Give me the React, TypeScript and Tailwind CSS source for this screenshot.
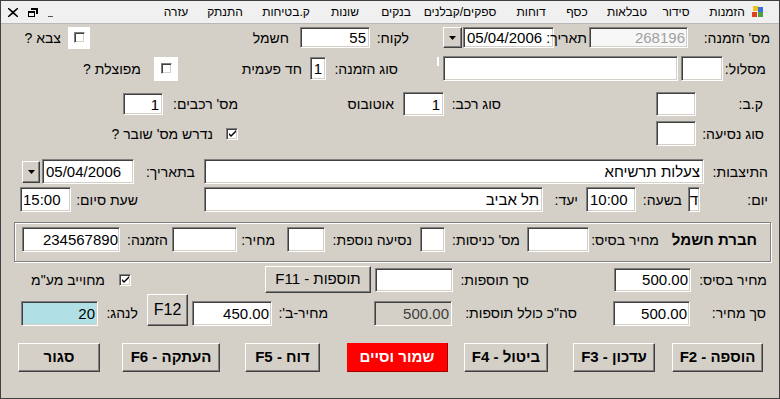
import React from 'react';

// classic win32 look
const sunken =
  'shrink-0 box-border border border-t-[#808080] border-l-[#808080] border-b-white border-r-white shadow-[inset_1px_1px_0_#404040,inset_-1px_-1px_0_#d4d0c8]';
const raised =
  'shrink-0 box-border border border-t-white border-l-white border-b-[#404040] border-r-[#404040] shadow-[inset_-1px_-1px_0_#808080] bg-[#d4d0c8] flex items-center justify-center';
const label = 'shrink-0 text-right whitespace-nowrap text-[14px] leading-none text-black';
const value = 'text-[15px] leading-none text-black whitespace-nowrap';

const DropArrow = () => (
  <svg width="7" height="4" viewBox="0 0 7 4">
    <path d="M0 0h7L3.5 4z" fill="#000" />
  </svg>
);

const Tick = () => (
  <svg width="9" height="9" viewBox="0 0 9 9">
    <path d="M1 4l2 2 5-5v2L3 8 1 6z" fill="#000" />
  </svg>
);

const menu: { text: string; w: string }[] = [
  { text: 'עזרה', w: 'w-[8px]' },
  { text: 'התנתק', w: 'w-[90px]' },
  { text: 'ק.בטיחות', w: 'w-[32px]' },
  { text: 'שונות', w: 'w-[86px]' },
  { text: 'בנקים', w: 'w-[16px]' },
  { text: 'ספקים/קבלנים', w: 'w-[112px]' },
  { text: 'דוחות', w: 'w-[30px]' },
  { text: 'כסף', w: 'w-[62px]' },
  { text: 'טבלאות', w: 'w-[38px]' },
  { text: 'סידור', w: 'w-[60px]' },
  { text: 'הזמנות', w: 'w-[42px]' },
];

export default function App() {
  return (
    <div className="w-[780px] h-[399px] box-border border border-[#404040] bg-[#d4d0c8] overflow-hidden font-['Liberation_Sans',Arial,sans-serif]">
      {/* menu strip */}
      <div className="h-[23px] flex items-center bg-[#f0f0f0] border-b border-[#b8b8b8]">
        <div className="w-[171px] shrink-0 flex items-center">
          <svg className="ml-[7px]" width="10" height="9" viewBox="0 0 10 9">
            <path d="M1 0l4 3.2L9 0h1v1L6.2 4.5 10 8v1H9L5 5.8 1 9H0V8l3.8-3.5L0 1V0z" fill="#000" />
          </svg>
          <svg className="ml-[10px]" width="10" height="9" viewBox="0 0 10 9">
            <path d="M3 0h7v6H8V2H3z M0 3h7v6H0z M1 5v3h5V5z" fill="#000" fillRule="evenodd" />
          </svg>
          <div className="ml-[10px] mt-[8px] w-[5px] h-[1px] bg-[#555]" />
        </div>
        {menu.map((m) => (
          <div key={m.text} dir="rtl" className={`${m.w} shrink-0 flex justify-center whitespace-nowrap text-[12px] text-black`}>
            {m.text}
          </div>
        ))}
        <div className="w-[20px] shrink-0 flex justify-center">
          <svg width="12" height="12" viewBox="0 0 12 12">
            <rect x="0" y="6" width="5" height="5" fill="#e04020" />
            <rect x="6" y="1" width="5" height="5" fill="#3a70d8" />
            <rect x="1" y="0" width="5" height="5" fill="#f0c020" />
            <rect x="6" y="6" width="5" height="5" fill="#50a040" />
          </svg>
        </div>
      </div>

      {/* row 1 */}
      <div className="mt-[3px] h-[21px] flex items-center">
        <div dir="rtl" className={`${label} ml-[13px] w-[47px]`}>צבא ?</div>
        <div className="ml-[7px] w-[22px] h-[22px] shrink-0 bg-white flex items-center justify-center">
          <div className={`${sunken} w-[11px] h-[11px] bg-white`} />
        </div>
        <div dir="rtl" className={`${label} ml-[110px] w-[89px]`}>חשמל</div>
        <div className={`${sunken} ml-[11px] w-[70px] h-[21px] bg-white flex items-center justify-end pr-[3px] ${value}`}>55</div>
        <div dir="rtl" className={`${label} w-[39px]`}>לקוח:</div>
        <div className={`${raised} ml-[34px] w-[19px] h-[21px]`}>
          <DropArrow />
        </div>
        <div className={`${sunken} ml-[1px] w-[91px] h-[21px] bg-white flex items-center pl-[3px] ${value}`}>05/04/2006</div>
        <div dir="rtl" className={`${label} w-[33px]`}>תאריך:</div>
        <div className={`${sunken} ml-[2px] w-[99px] h-[21px] bg-[#f7f7f7] flex items-center justify-end pr-[2px] text-[15px] leading-none text-[#a0a0a0]`}>268196</div>
        <div dir="rtl" className={`${label} w-[82px]`}>מס' הזמנה:</div>
      </div>

      {/* row 2 */}
      <div className="mt-[8px] h-[25px] flex items-center">
        <div dir="rtl" className={`${label} ml-[69px] w-[71px]`}>מפוצלת ?</div>
        <div className="ml-[13px] w-[24px] h-[24px] shrink-0 bg-white flex items-center justify-center">
          <div className={`${sunken} w-[11px] h-[11px] bg-white`} />
        </div>
        <div dir="rtl" className={`${label} ml-[53px] w-[71px]`}>חד פעמית</div>
        <div className={`${sunken} ml-[8px] w-[16px] h-[23px] bg-white flex items-center justify-center ${value}`}>1</div>
        <div dir="rtl" className={`${label} w-[72px]`}>סוג הזמנה:</div>
        <div className="ml-[39px] w-[2px] h-[9px] shrink-0 self-start mt-[1px] bg-white" />
        <div className={`${sunken} ml-[4px] w-[235px] h-[25px] bg-white`} />
        <div className={`${sunken} ml-[3px] w-[42px] h-[25px] bg-white`} />
        <div dir="rtl" className={`${label} w-[43px]`}>מסלול:</div>
      </div>

      {/* row 3 */}
      <div className="mt-[11px] h-[24px] flex items-center">
        <div className={`${sunken} ml-[122px] w-[40px] h-[22px] bg-white flex items-center justify-end pr-[3px] ${value}`}>1</div>
        <div dir="rtl" className={`${label} w-[75px]`}>מס' רכבים:</div>
        <div dir="rtl" className={`${label} ml-[93px] w-[63px]`}>אוטובוס</div>
        <div className={`${sunken} ml-[9px] w-[41px] h-[24px] bg-white flex items-center justify-end pr-[3px] ${value}`}>1</div>
        <div dir="rtl" className={`${label} w-[57px]`}>סוג רכב:</div>
        <div className={`${sunken} ml-[155px] w-[40px] h-[24px] bg-white`} />
        <div dir="rtl" className={`${label} w-[67px]`}>ק.ב:</div>
      </div>

      {/* row 4 */}
      <div className="mt-[5px] h-[25px] flex items-center">
        <div dir="rtl" className={`${label} ml-[89px] w-[123px]`}>נדרש מס' שובר ?</div>
        <div className={`${sunken} ml-[13px] w-[12px] h-[12px] bg-white flex items-center justify-center`}>
          <Tick />
        </div>
        <div className={`${sunken} ml-[418px] w-[40px] h-[25px] bg-white`} />
        <div dir="rtl" className={`${label} w-[68px]`}>סוג נסיעה:</div>
      </div>

      {/* row 5 */}
      <div className="mt-[13px] h-[25px] flex items-center">
        <div className={`${raised} ml-[21px] w-[18px] h-[22px]`}>
          <DropArrow />
        </div>
        <div className={`${sunken} ml-[2px] w-[92px] h-[25px] bg-white flex items-center pl-[3px] ${value}`}>05/04/2006</div>
        <div dir="rtl" className={`${label} w-[61px]`}>בתאריך:</div>
        <div className={`${sunken} ml-[9px] w-[500px] h-[25px] bg-white flex items-center justify-end pr-[3px] ${value}`}>
          <span dir="rtl">צעלות תרשיחא</span>
        </div>
        <div dir="rtl" className={`${label} w-[64px]`}>התיצבות:</div>
      </div>

      {/* row 6 */}
      <div className="mt-[3px] h-[25px] flex items-center">
        <div className={`${sunken} ml-[19px] w-[51px] h-[25px] bg-white flex items-center pl-[2px] ${value}`}>15:00</div>
        <div dir="rtl" className={`${label} w-[67px]`}>שעת סיום:</div>
        <div className={`${sunken} ml-[66px] w-[339px] h-[25px] bg-white flex items-center justify-end pr-[3px] ${value}`}>
          <span dir="rtl">תל אביב</span>
        </div>
        <div dir="rtl" className={`${label} w-[35px]`}>יעד:</div>
        <div className={`${sunken} ml-[8px] w-[50px] h-[25px] bg-white flex items-center pl-[3px] ${value}`}>10:00</div>
        <div dir="rtl" className={`${label} w-[46px]`}>בשעה:</div>
        <div className={`${sunken} ml-[6px] w-[12px] h-[25px] bg-white flex items-center justify-center ${value}`}>ד</div>
        <div dir="rtl" className={`${label} w-[68px]`}>יום:</div>
      </div>

      {/* company group */}
      <div className="mt-[10px] ml-[13px] w-[757px] h-[40px] box-border border border-[#808080] shadow-[inset_1px_1px_0_#fff,1px_1px_0_#fff] pt-[4px]">
        <div className="h-[25px] flex items-center">
          <div className={`${sunken} ml-[7px] w-[98px] h-[25px] bg-white flex items-center justify-end pr-[1px] ${value}`}>234567890</div>
          <div dir="rtl" className={`${label} w-[48px]`}>הזמנה:</div>
          <div className={`${sunken} ml-[4px] w-[65px] h-[25px] bg-white`} />
          <div dir="rtl" className={`${label} w-[38px]`}>מחיר:</div>
          <div className={`${sunken} ml-[12px] w-[38px] h-[25px] bg-white`} />
          <div dir="rtl" className={`${label} w-[87px]`}>נסיעה נוספת:</div>
          <div className={`${sunken} ml-[8px] w-[25px] h-[25px] bg-white`} />
          <div dir="rtl" className={`${label} w-[75px]`}>מס' כניסות:</div>
          <div className={`${sunken} ml-[7px] w-[62px] h-[25px] bg-white`} />
          <div dir="rtl" className={`${label} w-[70px]`}>מחיר בסיס:</div>
          <div dir="rtl" className={`${label} w-[98px] font-bold text-[15px] text-[#1c356b]`}>חברת חשמל</div>
        </div>
      </div>

      {/* row 7 */}
      <div className="mt-[4px] h-[27px] flex items-center">
        <div dir="rtl" className={`${label} ml-[19px] w-[85px]`}>מחוייב מע"מ</div>
        <div className={`${sunken} ml-[14px] w-[12px] h-[12px] bg-white flex items-center justify-center`}>
          <Tick />
        </div>
        <div dir="rtl" className={`${raised} ml-[134px] w-[106px] h-[27px] text-[15px] text-black`}>תוספות - F11</div>
        <div className={`${sunken} ml-[4px] w-[78px] h-[24px] bg-white`} />
        <div dir="rtl" className={`${label} w-[76px]`}>סך תוספות:</div>
        <div className={`${sunken} ml-[85px] w-[77px] h-[24px] bg-white flex items-center justify-end pr-[2px] ${value}`}>500.00</div>
        <div dir="rtl" className={`${label} w-[76px]`}>מחיר בסיס:</div>
      </div>

      {/* row 8 */}
      <div className="mt-[1px] h-[32px] flex items-end">
        <div className={`${sunken} ml-[20px] w-[77px] h-[25px] bg-[#b0e0e6] flex items-center justify-end pr-[2px] ${value}`}>20</div>
        <div dir="rtl" className={`${label} w-[40px] self-center mt-[6px]`}>לנהג:</div>
        <div className={`${raised} ml-[9px] w-[41px] h-[32px] text-[16px] text-black`}>F12</div>
        <div className={`${sunken} ml-[4px] w-[80px] h-[25px] bg-white flex items-center justify-end pr-[2px] ${value}`}>450.00</div>
        <div dir="rtl" className={`${label} w-[56px] self-center mt-[6px]`}>מחיר-ב':</div>
        <div className={`${sunken} ml-[46px] w-[78px] h-[25px] bg-[#d4d0c8] flex items-center justify-end pr-[2px] text-[15px] leading-none text-[#404040]`}>500.00</div>
        <div dir="rtl" className={`${label} w-[125px] self-center mt-[6px]`}>סה"כ כולל תוספות:</div>
        <div className={`${sunken} ml-[36px] w-[77px] h-[25px] bg-white flex items-center justify-end pr-[2px] ${value}`}>500.00</div>
        <div dir="rtl" className={`${label} w-[76px] self-center mt-[6px]`}>סך מחיר:</div>
      </div>

      {/* command buttons */}
      <div className="mt-[17px] h-[29px] flex items-center text-[15px] font-bold text-black">
        <div dir="rtl" className={`${raised} ml-[17px] w-[82px] h-[29px]`}>סגור</div>
        <div dir="rtl" className={`${raised} ml-[22px] w-[98px] h-[29px]`}>העתקה - F6</div>
        <div dir="rtl" className={`${raised} ml-[25px] w-[75px] h-[29px]`}>דוח - F5</div>
        <div dir="rtl" className="ml-[27px] w-[101px] h-[29px] shrink-0 flex items-center justify-center bg-[#ff0000] border-r border-b border-[#a00000] text-white">שמור וסיים</div>
        <div dir="rtl" className={`${raised} ml-[16px] w-[84px] h-[29px]`}>ביטול - F4</div>
        <div dir="rtl" className={`${raised} ml-[25px] w-[82px] h-[29px]`}>עדכון - F3</div>
        <div dir="rtl" className={`${raised} ml-[17px] w-[91px] h-[29px]`}>הוספה - F2</div>
      </div>
    </div>
  );
}
